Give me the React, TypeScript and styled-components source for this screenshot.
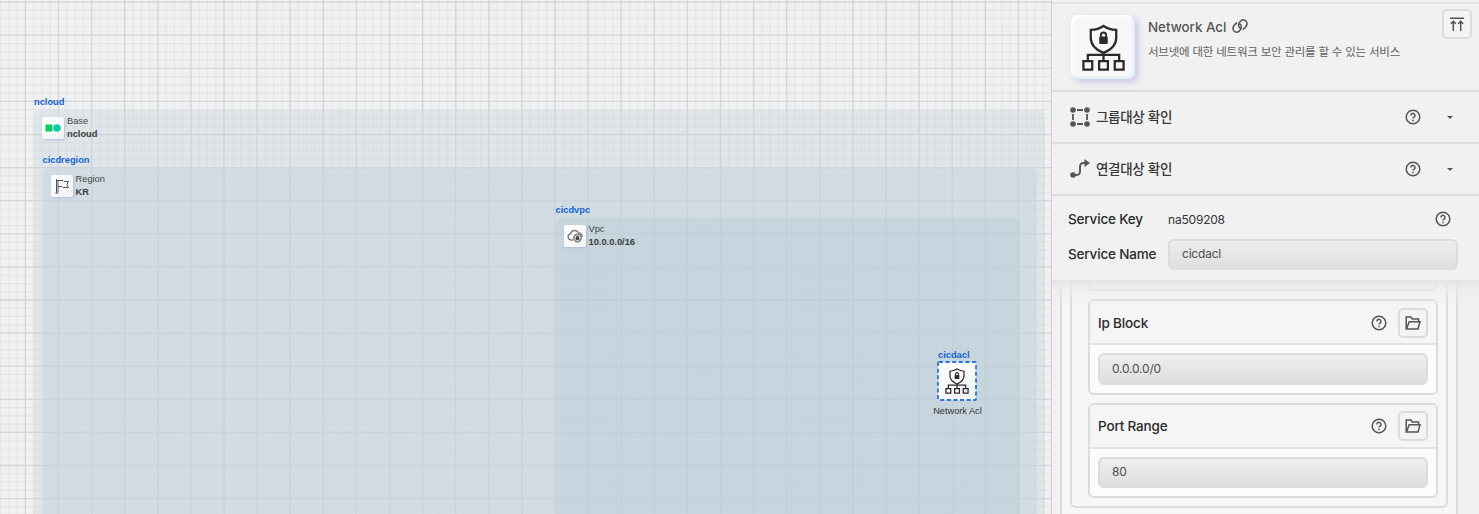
import React from "react";
import styled, { createGlobalStyle } from "styled-components";

const GlobalStyle = createGlobalStyle`
  *, *::before, *::after { box-sizing: border-box; }
  body { margin: 0; overflow: hidden; background: #efefef; }
`;

const line = "#dcdcdc";
const ink = "#555";

const Page = styled.div`
  display: flex;
  width: 100%;
  min-width: 1479px;
  height: 514px;
  overflow: hidden;
  font-family: Inter, "Noto Sans CJK KR", sans-serif;
`;

/* ---------- canvas ---------- */

const Canvas = styled.main`
  position: relative;
  flex: 1;
  overflow: hidden;
  background: #f0f0f0;
  font-family: "Liberation Sans", Arial, sans-serif;
`;

const GridSvg = styled.svg`
  position: absolute;
  inset: 0;
`;

const Group = styled.section<{ $x: number; $y: number; $w: number; $fill: string }>`
  position: absolute;
  left: ${(p) => p.$x}px;
  top: ${(p) => p.$y}px;
  width: ${(p) => p.$w}px;
  height: 500px;
  border-radius: 6px;
  background: ${(p) => p.$fill};
`;

const GroupTag = styled.div`
  position: absolute;
  left: 0;
  top: -13.5px;
  font-size: 9.3px;
  line-height: 11px;
  font-weight: 700;
  color: #1265d0;
  white-space: nowrap;
`;

const GroupHead = styled.div`
  display: flex;
  gap: 3px;
  padding: 7px 0 0 8px;
  align-items: flex-start;
`;

const Tile = styled.div`
  display: grid;
  place-items: center;
  width: 22px;
  height: 22px;
  border-radius: 2px;
  background: linear-gradient(135deg, #fff, #eff1f3);
  box-shadow: 1px 1px 2px rgba(150, 160, 215, 0.5);
`;

const GroupText = styled.div`
  margin-top: -2px;
  font-size: 9.3px;
  line-height: 12.6px;
  color: #444;
  white-space: nowrap;
  b { display: block; color: #3c3c3c; }
`;

const Node = styled.div`
  position: absolute;
  left: 917px;
  top: 350px;
  width: 80px;
  display: flex;
  flex-direction: column;
  align-items: center;
`;

const NodeTag = styled.div`
  align-self: flex-start;
  padding-left: 21px;
  font-size: 9.3px;
  line-height: 11px;
  font-weight: 700;
  color: #1265d0;
`;

const NodeTile = styled.div`
  position: relative;
  display: grid;
  place-items: center;
  width: 40px;
  height: 40px;
  border-radius: 4px;
  background: linear-gradient(135deg, #fafafa 50%, #e9f0f4);
  background-clip: content-box;
  padding: 1px;
`;

const Selection = styled.svg`
  position: absolute;
  inset: 0;
`;

const NodeName = styled.div`
  margin-top: 4px;
  padding-left: 1px;
  font-size: 9.2px;
  line-height: 12px;
  color: #333;
`;

/* ---------- side panel ---------- */

const Panel = styled.aside`
  position: relative;
  display: flex;
  flex-direction: column;
  width: 428px;
  border-left: 1px solid #cfcfcf;
  background: #f1f1f1;
  color: #2b2b2b;
`;

const Header = styled.header`
  display: flex;
  height: 90px;
  margin-top: 2px;
  border-top: 2px solid #e4e4e4;
  border-bottom: 2px solid ${line};
  padding: 5px 7px 0 19px;
`;

const HeroTile = styled.div`
  display: grid;
  place-items: center;
  width: 64px;
  height: 64px;
  margin-top: 6px;
  border-radius: 7px;
  background: #f8f8f8;
  box-shadow:
    inset -2px -2px 3px #d8eff5,
    inset 2px 2px 3px #fff,
    3px 3px 6px rgba(165, 160, 225, 0.55);
`;

const Titles = styled.div`
  flex: 1;
  padding: 8px 0 0 13px;
`;

const Title = styled.div`
  display: flex;
  align-items: center;
  gap: 6px;
  height: 20px;
  font-size: 13.4px;
  letter-spacing: -0.03px;
  font-weight: 500;
  color: #555;
  svg { margin-top: -2px; }
`;

const Subtitle = styled.div`
  margin-top: 7px;
  font-size: 11.5px;
  line-height: 17px;
  letter-spacing: -0.22px;
  color: #606060;
  white-space: nowrap;
`;

const IconButton = styled.button`
  display: grid;
  place-items: center;
  width: 30px;
  height: 30px;
  padding: 0;
  border: 2px solid ${line};
  border-radius: 5px;
  background: #f4f4f4;
`;

const FoldRow = styled.div`
  display: flex;
  align-items: center;
  height: 52px;
  border-bottom: 2px solid ${line};
  padding: 0 25px 0 18px;
`;

const FoldLabel = styled.div`
  flex: 1;
  padding: 0 0 2px 6px;
  font-size: 13.5px;
  letter-spacing: -0.3px;
  font-weight: 500;
  color: #383838;
`;

const Caret = styled.i`
  width: 8px;
  height: 4px;
  margin: 1px 0 0 25px;
  background: ${ink};
  clip-path: polygon(6% 0, 94% 0, 50% 90%);
`;

const Form = styled.div`
  position: relative;
  z-index: 1;
  height: 84px;
  padding: 6px 21px 0 16px;
`;

const Field = styled.div`
  display: grid;
  grid-template-columns: 100px 1fr auto;
  align-items: center;
  height: 35px;
`;

const Label = styled.label`
  padding-bottom: 1px;
  font-size: 13.5px;
  letter-spacing: -0.17px;
  font-weight: 500;
  white-space: nowrap;
`;

const Value = styled.span`
  font-size: 12px;
  letter-spacing: -0.2px;
  color: #333;
`;

const HelpSlot = styled.span`
  display: flex;
  margin: -2px 7px 0 0;
`;

const Input = styled.div<{ $h?: number }>`
  display: flex;
  align-items: center;
  height: ${(p) => p.$h ?? 31}px;
  padding: 0 12px 2px;
  border: 2px solid ${line};
  border-radius: 6px;
  background: linear-gradient(#eeeeee, #dedede);
  font-size: 12px;
  letter-spacing: -0.2px;
  color: #4c4c4c;
`;

const Scroll = styled.div`
  position: relative;
  flex: 1;
  overflow: hidden;
  padding: 0 21px 0 8px;
  &::before {
    content: "";
    position: absolute;
    inset: 0 0 auto 0;
    height: 26px;
    background: linear-gradient(rgba(228, 228, 228, 1), rgba(236, 236, 236, 0.65) 35%, rgba(241, 241, 241, 0));
  }
`;

const Outer = styled.div`
  height: 300px;
  padding: 0 8px;
  border: solid ${line};
  border-width: 0 2px;
  background: #f6f6f6;
`;

const Inner = styled.div`
  height: 228px;
  padding: 0 8px 0 16px;
  border: 2px solid ${line};
  border-top: 0;
  border-radius: 0 0 6px 6px;
`;

const PreviousCard = styled.div`
  height: 11px;
  margin-bottom: 8px;
  border: 2px solid ${line};
  border-top: 0;
  border-radius: 0 0 6px 6px;
`;

const Card = styled.div`
  margin-bottom: 8px;
  border: 2px solid ${line};
  border-radius: 6px;
  background: #fcfbfd;
  overflow: hidden;
`;

const CardHead = styled.div<{ $drop?: number }>`
  display: flex;
  align-items: center;
  height: 44px;
  padding: ${(p) => p.$drop ?? 0}px 8px 0;
  border-bottom: 2px solid #e3e3e3;
  background: #f5f5f5;
  ${Label} { flex: 1; padding-bottom: ${(p) => (p.$drop ? 0 : 1)}px; }
  ${IconButton} { margin-left: 11px; }
`;

const CardBody = styled.div`
  padding: 8px;
`;

/* ---------- drawings ---------- */

const span = (start: number, step: number, end: number) =>
  Array.from({ length: Math.ceil((end - start) / step) }, (_, i) => start + i * step);

const gridPath = (sx: number, sy: number, step: number) =>
  span(sx, step, 1052).map((x) => `M${x.toFixed(2)} 0V514`).join("") +
  span(sy, step, 514).map((y) => `M0 ${y.toFixed(2)}H1052`).join("");

const Grid = () => (
  <GridSvg width="1052" height="514" fill="none">
    <path d={gridPath(0.6, 2.1, 8.275)} stroke="#e3e4e5" strokeWidth="1.1" />
    <path d={gridPath(25.4, 2.1, 33.1)} stroke="#d5d6d7" strokeWidth="1.3" />
  </GridSvg>
);

const AclIcon = ({ size }: { size: number }) => (
  <svg width={size} height={size} viewBox="0 0 48 48" fill="none" stroke="#2a2a2a" strokeWidth="2.3">
    <path d="M24 2c4 2.6 8 3.8 13 4v8c0 7-4.500 12-13 15.500C15.500 26 11 21 11 14V6c5-.2 9-1.400 13-4Z" />
    <path d="M24 29v9M8 38v-6.500h32V38" />
    <path d="M3.500 38h9v8.500h-9zM19.500 38h9v8.500h-9zM35.500 38h9v8.500h-9z" />
    <path d="M21.300 13.500v-2.200a2.700 2.700 0 0 1 5.400 0v2.200" strokeWidth="2" />
    <rect x="19.700" y="12.800" width="8.600" height="7.700" rx="1" fill="#2a2a2a" stroke="none" />
  </svg>
);

const Help = () => (
  <svg width="16" height="16" viewBox="0 0 16 16" fill="none" stroke={ink} strokeWidth="1.5">
    <circle cx="8" cy="8" r="6.8" />
    <path d="M5.900 6.500a2.050 2.050 0 1 1 3.200 1.600c-.7.45-1.100.7-1.100 1.500" />
    <path d="M8 10.700v1.500" />
  </svg>
);

const LinkIcon = () => (
  <svg width="16" height="16" viewBox="0 0 16 16" fill="none" stroke={ink} strokeWidth="1.5" strokeLinecap="round">
    <path d="M8.600 10.200C6.200 9.200 6 6 8 3.800C10 1 14 1.200 14.900 4.600C15.400 7.500 13 10 11.400 11.200" />
    <path d="M7.400 5.800C9.800 6.800 10 10 8 12.200C6 15 2 14.800 1.100 11.400C.6 8.500 3 6 4.600 4.800" />
  </svg>
);

const FolderIcon = () => (
  <svg width="16" height="14" viewBox="0 0 16 14" fill="none" stroke={ink} strokeWidth="1.5">
    <path d="M13.600 5V2.900H7.300L6 1H1.200v12h11.800l2-7.300H4.200L1.500 13" />
  </svg>
);

const ToTopIcon = () => (
  <svg width="14" height="15" viewBox="0 0 14 15" fill="none" stroke={ink} strokeWidth="1.5">
    <path d="M0 1.200h14M3.300 14V5M10.700 14V5M.8 6.700l2.500-2.500 2.500 2.500M8.200 6.700l2.500-2.500 2.500 2.500" />
  </svg>
);

const GroupIcon = () => (
  <svg width="20" height="20" viewBox="0 0 20 20" fill={ink}>
    <circle cx="3" cy="3" r="2.8" />
    <circle cx="17" cy="3" r="2.8" />
    <circle cx="3" cy="17" r="2.8" />
    <circle cx="17" cy="17" r="2.8" />
    <path d="M7 3h6M7 17h6M3 7v6M17 7v6" stroke={ink} strokeWidth="1.8" />
  </svg>
);

const ConnectIcon = () => (
  <svg width="20" height="20" viewBox="0 0 20 20" fill={ink}>
    <circle cx="3" cy="16" r="2.8" />
    <path d="M3 16h3.500q3.500 0 3.500-3.500V7.500Q10 4 13.500 4H16" fill="none" stroke={ink} strokeWidth="1.9" />
    <path d="M14.500 0 20 4l-5.500 4z" />
  </svg>
);

const NcloudIcon = () => (
  <svg width="16" height="8" viewBox="0 0 16 8">
    <path d="M.5.500h7v7h-7z" fill="#08cf5d" />
    <circle cx="12" cy="4" r="3.8" fill="#0bcfa3" />
  </svg>
);

const FlagIcon = () => (
  <svg width="14" height="16" viewBox="0 0 14 16" fill="none" stroke={ink} strokeWidth="1">
    <path d="M1.500 1v14M3 3v11M1.500 2.500H8l1 1h4.500l-1.500 3 1.500 3H8l-1-1H3M.5 15h3" />
  </svg>
);

const CloudIcon = () => (
  <svg width="16" height="14" viewBox="0 0 16 14" fill="none" stroke="#808080" strokeWidth="1.5">
    <path d="M6 11H4a3.200 3.200 0 0 1-.4-6.300A4.200 4.200 0 0 1 11.500 4a3.500 3.500 0 0 1 3.600 4" />
    <circle cx="10.500" cy="9" r="3.7" fill="#e8e8e8" />
    <path d="M9 8.500h3v2.200H9zM9.700 8.500V7.200h1.600v1.300" fill="#444" stroke="#444" strokeWidth=".7" />
  </svg>
);

/* ---------- page ---------- */

const groups = [
  { tag: "ncloud", kind: "Base", name: "ncloud", x: 34, y: 110, w: 1010.5, fill: "rgba(196,211,222,.36)", icon: <NcloudIcon /> },
  { tag: "cicdregion", kind: "Region", name: "KR", x: 42.5, y: 168, w: 994, fill: "rgba(190,209,219,.42)", icon: <FlagIcon /> },
  { tag: "cicdvpc", kind: "Vpc", name: "10.0.0.0/16", x: 555.5, y: 218, w: 464, fill: "rgba(178,199,212,.32)", icon: <CloudIcon /> },
];

const rules = [
  { label: "Ip Block", value: "0.0.0.0/0", height: 32, drop: 1 },
  { label: "Port Range", value: "80", height: 31, drop: 0 },
];

export default function App() {
  return (
    <Page>
      <GlobalStyle />
      <Canvas>
        <Grid />
        {groups.map((g) => (
          <Group key={g.tag} $x={g.x} $y={g.y} $w={g.w} $fill={g.fill}>
            <GroupTag>{g.tag}</GroupTag>
            <GroupHead>
              <Tile>{g.icon}</Tile>
              <GroupText>
                {g.kind}
                <b>{g.name}</b>
              </GroupText>
            </GroupHead>
          </Group>
        ))}
        <Node>
          <NodeTag>cicdacl</NodeTag>
          <NodeTile>
            <AclIcon size={26} />
            <Selection width="40" height="40" fill="none">
              <rect x="1" y="1" width="38" height="38" rx="1" stroke="#2a74d8" strokeWidth="1.8" strokeDasharray="4 2.6" />
            </Selection>
          </NodeTile>
          <NodeName>Network Acl</NodeName>
        </Node>
      </Canvas>
      <Panel>
        <Header>
          <HeroTile>
            <AclIcon size={47} />
          </HeroTile>
          <Titles>
            <Title>
              Network Acl <LinkIcon />
            </Title>
            <Subtitle>서브넷에 대한 네트워크 보안 관리를 할 수 있는 서비스</Subtitle>
          </Titles>
          <IconButton>
            <ToTopIcon />
          </IconButton>
        </Header>
        <FoldRow>
          <GroupIcon />
          <FoldLabel>그룹대상 확인</FoldLabel>
          <Help />
          <Caret />
        </FoldRow>
        <FoldRow>
          <ConnectIcon />
          <FoldLabel>연결대상 확인</FoldLabel>
          <Help />
          <Caret />
        </FoldRow>
        <Form>
          <Field>
            <Label>Service Key</Label>
            <Value>na509208</Value>
            <HelpSlot>
              <Help />
            </HelpSlot>
          </Field>
          <Field>
            <Label>Service Name</Label>
            <Input>cicdacl</Input>
          </Field>
        </Form>
        <Scroll>
          <Outer>
            <Inner>
              <PreviousCard />
              {rules.map((r) => (
                <Card key={r.label}>
                  <CardHead $drop={r.drop}>
                    <Label>{r.label}</Label>
                    <Help />
                    <IconButton>
                      <FolderIcon />
                    </IconButton>
                  </CardHead>
                  <CardBody>
                    <Input $h={r.height}>{r.value}</Input>
                  </CardBody>
                </Card>
              ))}
            </Inner>
          </Outer>
        </Scroll>
      </Panel>
    </Page>
  );
}
